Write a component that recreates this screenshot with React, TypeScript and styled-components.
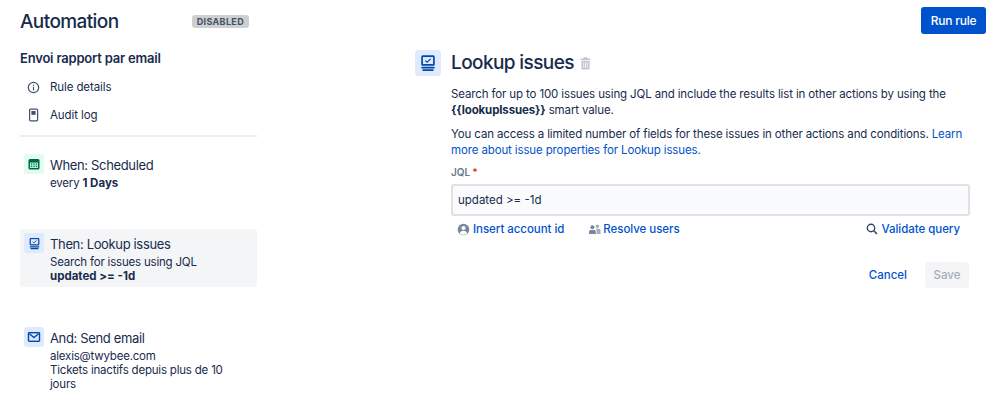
import styled, { createGlobalStyle } from "styled-components";

const GlobalStyle = createGlobalStyle`
  html, body {
    margin: 0;
    padding: 0;
    background: #ffffff;
  }
  body {
    font-family: "Inter", "Liberation Sans", sans-serif;
    color: #172b4d;
    overflow: hidden;
  }
`;

const CalendarIcon = () => (
  <svg width="12" height="12" viewBox="0 0 12 12">
    <rect x="0.5" y="1" width="11" height="10.5" rx="1.5" fill="#006644" />
    <rect x="2" y="4.6" width="8" height="5.4" fill="#abf5d1" />
    <path d="M3 5.6h1.2v1.2H3zM5.4 5.6h1.2v1.2H5.4zM7.8 5.6H9v1.2H7.8zM3 7.8h1.2V9H3zM5.4 7.8h1.2V9H5.4zM7.8 7.8H9V9H7.8z" fill="#006644" />
  </svg>
);

const LookupIcon = ({ size }: { size: number }) => (
  <svg width={size} height={size} viewBox="0 0 16 16">
    <rect x="2" y="1.2" width="12" height="9.2" rx="1.4" fill="#0747a6" />
    <rect x="3.5" y="2.7" width="9" height="6.2" fill="#deebff" />
    <path d="M5.6 5.9l1.6 1.4 3.2-3" stroke="#0747a6" strokeWidth="1.1" fill="none" />
    <rect x="2" y="11.4" width="12" height="1.4" rx="0.5" fill="#0747a6" />
    <rect x="3" y="13.6" width="10" height="1.4" rx="0.5" fill="#0747a6" />
  </svg>
);

const MailIcon = () => (
  <svg width="14" height="14" viewBox="0 0 14 14">
    <rect x="0.8" y="2" width="12.4" height="10" rx="1.4" fill="#0747a6" />
    <rect x="2.2" y="3.4" width="9.6" height="7.2" fill="#deebff" />
    <path d="M2.4 3.8L7 7.6l4.6-3.8" stroke="#0747a6" strokeWidth="1.3" fill="none" />
  </svg>
);

const InfoIcon = () => (
  <svg width="13" height="13" viewBox="0 0 13 13">
    <circle cx="6.5" cy="6.5" r="5.2" stroke="#42526e" strokeWidth="1.2" fill="none" />
    <rect x="5.9" y="5.8" width="1.2" height="3.6" fill="#42526e" />
    <rect x="5.9" y="3.6" width="1.2" height="1.3" fill="#42526e" />
  </svg>
);

const PageIcon = () => (
  <svg width="13" height="14" viewBox="0 0 13 14">
    <rect x="2.6" y="1.2" width="8" height="11.6" rx="1" stroke="#42526e" strokeWidth="1.2" fill="none" />
    <rect x="4.4" y="3" width="4.2" height="3.8" fill="#42526e" />
  </svg>
);

const TrashIcon = () => (
  <svg width="11" height="13" viewBox="0 0 11 13">
    <rect x="0.5" y="1.6" width="10" height="1.5" rx="0.5" fill="#c1c7d0" />
    <rect x="3.5" y="0.3" width="4" height="1.6" rx="0.5" fill="#c1c7d0" />
    <path d="M1.4 3.8h8.2v7.8a1 1 0 0 1-1 1H2.4a1 1 0 0 1-1-1z" fill="#c1c7d0" />
    <path d="M3.7 5.2v5.8M5.5 5.2v5.8M7.3 5.2v5.8" stroke="#ffffff" strokeWidth="0.7" />
  </svg>
);

const UserIcon = () => (
  <svg width="13" height="13" viewBox="0 0 13 13">
    <circle cx="6.5" cy="6.5" r="5.8" fill="#7a869a" />
    <circle cx="6.5" cy="5" r="2.1" fill="#ffffff" />
    <path d="M2.8 10.2c.7-1.7 2-2.4 3.7-2.4s3 .7 3.7 2.4a5 5 0 0 1-7.4 0z" fill="#ffffff" />
  </svg>
);

const UsersIcon = () => (
  <svg width="13" height="11" viewBox="0 0 13 11">
    <circle cx="4.4" cy="3.2" r="2" fill="#7a869a" />
    <circle cx="9.4" cy="2.2" r="1.7" fill="#a5adba" />
    <path d="M1 10V7.8C1 6.6 2 6 3 6h2.8c1 0 2 .6 2 1.8V10z" fill="#7a869a" />
    <path d="M8.6 10V7.2c0-1-.4-1.8-1-2.4h3.2c1 0 1.7.7 1.7 1.7V10z" fill="#a5adba" />
  </svg>
);

const SearchIcon = () => (
  <svg width="12" height="12" viewBox="0 0 12 12">
    <circle cx="5" cy="5" r="3.7" stroke="#344563" strokeWidth="1.4" fill="none" />
    <path d="M7.8 7.8l3.1 3.1" stroke="#344563" strokeWidth="1.5" />
  </svg>
);

const Page = styled.div`
  width: 999px;
  height: 416px;
  display: flex;
  overflow: hidden;
`;

const Sidebar = styled.aside`
  width: 237px;
  margin-left: 20px;
  padding-top: 9px;
  flex-shrink: 0;
`;

const TitleRow = styled.div`
  display: flex;
  align-items: center;
  justify-content: space-between;
  height: 24px;
  padding-right: 8px;
`;

const PageTitle = styled.h1`
  margin: 0;
  padding-top: 2px;
  font-size: 19px;
  line-height: 22px;
  font-weight: 500;
  letter-spacing: -0.6px;
`;

const Badge = styled.span`
  background: #cfcfcf;
  color: #42526e;
  border-radius: 3px;
  font-size: 9px;
  line-height: 13px;
  font-weight: 700;
  letter-spacing: 0.35px;
  padding: 0 5px;
`;

const RuleName = styled.h2`
  margin: 16px 0 0;
  font-size: 13px;
  line-height: 18px;
  font-weight: 600;
  letter-spacing: -0.2px;
`;

const NavList = styled.nav`
  margin-top: 6px;
  padding-bottom: 6px;
  border-bottom: 2px solid #ebecf0;
`;

const NavRow = styled.div`
  display: flex;
  align-items: center;
  height: 28px;
  padding-left: 7px;
  gap: 10px;
  font-size: 11.5px;
  letter-spacing: -0.1px;
`;

const Steps = styled.div`
  margin-top: 13px;
  display: flex;
  flex-direction: column;
`;

const Step = styled.div<{ $active?: boolean; $height: number; $top?: number }>`
  display: flex;
  gap: 6px;
  padding: 4px;
  height: ${(p) => p.$height}px;
  margin-top: ${(p) => p.$top ?? 0}px;
  box-sizing: border-box;
  border-radius: 3px;
  background: ${(p) => (p.$active ? "#f4f5f7" : "transparent")};
`;

const StepIcon = styled.div<{ $bg: string }>`
  width: 20px;
  height: 20px;
  border-radius: 3px;
  background: ${(p) => p.$bg};
  display: flex;
  align-items: center;
  justify-content: center;
  flex-shrink: 0;
`;

const StepBody = styled.div`
  font-size: 11.5px;
  line-height: 14px;
  letter-spacing: -0.2px;
  min-width: 0;
  padding-right: 20px;
`;

const StepTitle = styled.div`
  font-size: 13px;
  line-height: 16px;
  letter-spacing: -0.35px;
  margin: 3px 0 3px;
`;

const StepStrong = styled.b`
  letter-spacing: 0;
`;

const RightPane = styled.div`
  flex: 1;
  display: flex;
  flex-direction: column;
  padding: 7px 13px 0 158px;
`;

const TopActions = styled.div`
  display: flex;
  justify-content: flex-end;
  margin-bottom: 16px;
`;

const RunButton = styled.div`
  width: 65px;
  height: 27px;
  box-sizing: border-box;
  border-radius: 3px;
  background: #0052cc;
  color: #ffffff;
  font-size: 12px;
  font-weight: 500;
  letter-spacing: -0.2px;
  display: flex;
  align-items: center;
  justify-content: center;
`;

const Main = styled.main`
  width: 555px;
  display: flex;
  gap: 10px;
`;

const LargeIcon = styled.div`
  width: 26px;
  height: 26px;
  border-radius: 3px;
  background: #deebff;
  display: flex;
  align-items: center;
  justify-content: center;
  flex-shrink: 0;
`;

const Content = styled.div`
  flex: 1;
  min-width: 0;
`;

const HeadingRow = styled.div`
  display: flex;
  align-items: center;
  gap: 6px;
  height: 26px;
`;

const Heading = styled.h2`
  margin: 0;
  font-size: 19px;
  line-height: 26px;
  font-weight: 500;
  letter-spacing: -0.6px;
`;

const Paragraph = styled.p`
  margin: 10px 0 0;
  font-size: 11.5px;
  line-height: 16px;
  letter-spacing: -0.13px;
  & + & {
    margin-top: 8px;
  }
`;

const DocLink = styled.span`
  color: #0052cc;
`;

const FieldLabel = styled.div`
  margin-top: 7px;
  font-size: 10px;
  line-height: 14px;
  font-weight: 600;
  color: #6b778c;
`;

const Required = styled.span`
  color: #de350b;
  margin-left: 2px;
`;

const QueryInput = styled.div`
  margin-top: 5px;
  height: 32px;
  box-sizing: border-box;
  border: 2px solid #dfe1e6;
  border-radius: 3px;
  background: #fafbfc;
  padding: 0 5px;
  display: flex;
  align-items: center;
  font-size: 11.5px;
`;

const ActionRow = styled.div`
  display: flex;
  align-items: center;
  height: 26px;
  padding: 0 10px 0 6px;
`;

const ActionLink = styled.div<{ $left?: string; $gap?: number }>`
  display: flex;
  align-items: center;
  gap: ${(p) => p.$gap ?? 3}px;
  color: #0052cc;
  font-size: 11.5px;
  font-weight: 500;
  letter-spacing: -0.05px;
  margin-left: ${(p) => p.$left ?? "0"};
`;

const Footer = styled.div`
  margin-top: 20px;
  display: flex;
  justify-content: flex-end;
  align-items: center;
  gap: 18px;
  padding-right: 1px;
`;

const CancelButton = styled.div`
  color: #0052cc;
  font-size: 11.5px;
  font-weight: 500;
`;

const SaveButton = styled.div`
  width: 44px;
  height: 26px;
  border-radius: 3px;
  background: #f4f5f7;
  color: #a5adba;
  font-size: 11.5px;
  font-weight: 500;
  display: flex;
  align-items: center;
  justify-content: center;
`;

export default function App() {
  return (
    <>
      <GlobalStyle />
      <Page>
        <Sidebar>
          <TitleRow>
            <PageTitle>Automation</PageTitle>
            <Badge>DISABLED</Badge>
          </TitleRow>
          <RuleName>Envoi rapport par email</RuleName>
          <NavList>
            <NavRow>
              <InfoIcon />
              Rule details
            </NavRow>
            <NavRow>
              <PageIcon />
              Audit log
            </NavRow>
          </NavList>
          <Steps>
            <Step $height={79}>
              <StepIcon $bg="#e3fcef">
                <CalendarIcon />
              </StepIcon>
              <StepBody>
                <StepTitle>When: Scheduled</StepTitle>
                every <StepStrong>1 Days</StepStrong>
              </StepBody>
            </Step>
            <Step $active $height={58}>
              <StepIcon $bg="#deebff">
                <LookupIcon size={13} />
              </StepIcon>
              <StepBody>
                <StepTitle>Then: Lookup issues</StepTitle>
                Search for issues using JQL
                <br />
                <StepStrong>updated &gt;= -1d</StepStrong>
              </StepBody>
            </Step>
            <Step $height={80} $top={36}>
              <StepIcon $bg="#deebff">
                <MailIcon />
              </StepIcon>
              <StepBody>
                <StepTitle>And: Send email</StepTitle>
                alexis@twybee.com
                <br />
                Tickets inactifs depuis plus de 10 jours
              </StepBody>
            </Step>
          </Steps>
        </Sidebar>
        <RightPane>
          <TopActions>
            <RunButton>Run rule</RunButton>
          </TopActions>
          <Main>
            <LargeIcon>
              <LookupIcon size={18} />
            </LargeIcon>
            <Content>
              <HeadingRow>
                <Heading>Lookup issues</Heading>
                <TrashIcon />
              </HeadingRow>
              <Paragraph>
                Search for up to 100 issues using JQL and include the results list in other actions by using the{" "}
                <b>{"{{lookupIssues}}"}</b> smart value.
              </Paragraph>
              <Paragraph>
                You can access a limited number of fields for these issues in other actions and conditions.{" "}
                <DocLink>Learn more about issue properties for Lookup issues.</DocLink>
              </Paragraph>
              <FieldLabel>
                JQL<Required>*</Required>
              </FieldLabel>
              <QueryInput>updated &gt;= -1d</QueryInput>
              <ActionRow>
                <ActionLink>
                  <UserIcon />
                  Insert account id
                </ActionLink>
                <ActionLink $left="24px" $gap={2}>
                  <UsersIcon />
                  Resolve users
                </ActionLink>
                <ActionLink $left="auto" $gap={4}>
                  <SearchIcon />
                  Validate query
                </ActionLink>
              </ActionRow>
              <Footer>
                <CancelButton>Cancel</CancelButton>
                <SaveButton>Save</SaveButton>
              </Footer>
            </Content>
          </Main>
        </RightPane>
      </Page>
    </>
  );
}
